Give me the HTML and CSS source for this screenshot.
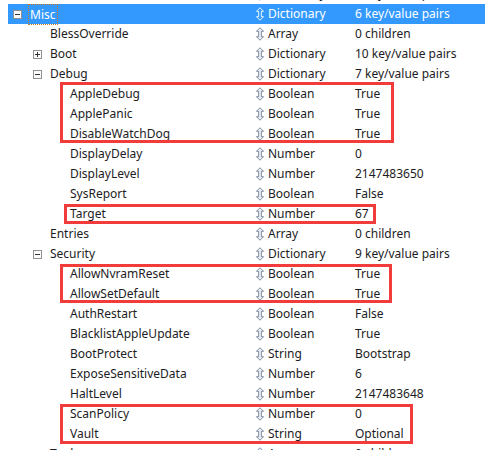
FILE: index.html
```html
<!DOCTYPE html>
<html>
<head>
<meta charset="utf-8">
<link rel="stylesheet" href="styles.css">
</head>
<body>
<div class="tree">
  <div class="row"><div class="name l1">Kernel</div><div class="ic"><svg class="arr" viewBox="0 0 9 15"><path d="M4.5 0.5 L8.5 4.5 L6 4.5 L6 10.5 L8.5 10.5 L4.5 14.5 L0.5 10.5 L3 10.5 L3 4.5 L0.5 4.5 Z"/></svg></div><div class="type">Dictionary</div><div class="val">6 key/value pairs</div></div>
  <div class="row sel"><div class="name l0"><span class="tg minus"></span><span class="focus">Misc</span></div><div class="ic"><svg class="arr" viewBox="0 0 9 15"><path d="M4.5 0.5 L8.5 4.5 L6 4.5 L6 10.5 L8.5 10.5 L4.5 14.5 L0.5 10.5 L3 10.5 L3 4.5 L0.5 4.5 Z"/></svg></div><div class="type">Dictionary</div><div class="val">6 key/value pairs</div></div>
  <div class="row"><div class="name l1">BlessOverride</div><div class="ic"><svg class="arr" viewBox="0 0 9 15"><path d="M4.5 0.5 L8.5 4.5 L6 4.5 L6 10.5 L8.5 10.5 L4.5 14.5 L0.5 10.5 L3 10.5 L3 4.5 L0.5 4.5 Z"/></svg></div><div class="type">Array</div><div class="val">0 children</div></div>
  <div class="row"><div class="name l1"><span class="tg plus"></span>Boot</div><div class="ic"><svg class="arr" viewBox="0 0 9 15"><path d="M4.5 0.5 L8.5 4.5 L6 4.5 L6 10.5 L8.5 10.5 L4.5 14.5 L0.5 10.5 L3 10.5 L3 4.5 L0.5 4.5 Z"/></svg></div><div class="type">Dictionary</div><div class="val">10 key/value pairs</div></div>
  <div class="row"><div class="name l1"><span class="tg minus"></span>Debug</div><div class="ic"><svg class="arr" viewBox="0 0 9 15"><path d="M4.5 0.5 L8.5 4.5 L6 4.5 L6 10.5 L8.5 10.5 L4.5 14.5 L0.5 10.5 L3 10.5 L3 4.5 L0.5 4.5 Z"/></svg></div><div class="type">Dictionary</div><div class="val">7 key/value pairs</div></div>
  <div class="row"><div class="name l2">AppleDebug</div><div class="ic"><svg class="arr" viewBox="0 0 9 15"><path d="M4.5 0.5 L8.5 4.5 L6 4.5 L6 10.5 L8.5 10.5 L4.5 14.5 L0.5 10.5 L3 10.5 L3 4.5 L0.5 4.5 Z"/></svg></div><div class="type">Boolean</div><div class="val">True</div></div>
  <div class="row"><div class="name l2">ApplePanic</div><div class="ic"><svg class="arr" viewBox="0 0 9 15"><path d="M4.5 0.5 L8.5 4.5 L6 4.5 L6 10.5 L8.5 10.5 L4.5 14.5 L0.5 10.5 L3 10.5 L3 4.5 L0.5 4.5 Z"/></svg></div><div class="type">Boolean</div><div class="val">True</div></div>
  <div class="row"><div class="name l2">DisableWatchDog</div><div class="ic"><svg class="arr" viewBox="0 0 9 15"><path d="M4.5 0.5 L8.5 4.5 L6 4.5 L6 10.5 L8.5 10.5 L4.5 14.5 L0.5 10.5 L3 10.5 L3 4.5 L0.5 4.5 Z"/></svg></div><div class="type">Boolean</div><div class="val">True</div></div>
  <div class="row"><div class="name l2">DisplayDelay</div><div class="ic"><svg class="arr" viewBox="0 0 9 15"><path d="M4.5 0.5 L8.5 4.5 L6 4.5 L6 10.5 L8.5 10.5 L4.5 14.5 L0.5 10.5 L3 10.5 L3 4.5 L0.5 4.5 Z"/></svg></div><div class="type">Number</div><div class="val">0</div></div>
  <div class="row"><div class="name l2">DisplayLevel</div><div class="ic"><svg class="arr" viewBox="0 0 9 15"><path d="M4.5 0.5 L8.5 4.5 L6 4.5 L6 10.5 L8.5 10.5 L4.5 14.5 L0.5 10.5 L3 10.5 L3 4.5 L0.5 4.5 Z"/></svg></div><div class="type">Number</div><div class="val">2147483650</div></div>
  <div class="row"><div class="name l2">SysReport</div><div class="ic"><svg class="arr" viewBox="0 0 9 15"><path d="M4.5 0.5 L8.5 4.5 L6 4.5 L6 10.5 L8.5 10.5 L4.5 14.5 L0.5 10.5 L3 10.5 L3 4.5 L0.5 4.5 Z"/></svg></div><div class="type">Boolean</div><div class="val">False</div></div>
  <div class="row"><div class="name l2">Target</div><div class="ic"><svg class="arr" viewBox="0 0 9 15"><path d="M4.5 0.5 L8.5 4.5 L6 4.5 L6 10.5 L8.5 10.5 L4.5 14.5 L0.5 10.5 L3 10.5 L3 4.5 L0.5 4.5 Z"/></svg></div><div class="type">Number</div><div class="val">67</div></div>
  <div class="row"><div class="name l1">Entries</div><div class="ic"><svg class="arr" viewBox="0 0 9 15"><path d="M4.5 0.5 L8.5 4.5 L6 4.5 L6 10.5 L8.5 10.5 L4.5 14.5 L0.5 10.5 L3 10.5 L3 4.5 L0.5 4.5 Z"/></svg></div><div class="type">Array</div><div class="val">0 children</div></div>
  <div class="row"><div class="name l1"><span class="tg minus"></span>Security</div><div class="ic"><svg class="arr" viewBox="0 0 9 15"><path d="M4.5 0.5 L8.5 4.5 L6 4.5 L6 10.5 L8.5 10.5 L4.5 14.5 L0.5 10.5 L3 10.5 L3 4.5 L0.5 4.5 Z"/></svg></div><div class="type">Dictionary</div><div class="val">9 key/value pairs</div></div>
  <div class="row"><div class="name l2">AllowNvramReset</div><div class="ic"><svg class="arr" viewBox="0 0 9 15"><path d="M4.5 0.5 L8.5 4.5 L6 4.5 L6 10.5 L8.5 10.5 L4.5 14.5 L0.5 10.5 L3 10.5 L3 4.5 L0.5 4.5 Z"/></svg></div><div class="type">Boolean</div><div class="val">True</div></div>
  <div class="row"><div class="name l2">AllowSetDefault</div><div class="ic"><svg class="arr" viewBox="0 0 9 15"><path d="M4.5 0.5 L8.5 4.5 L6 4.5 L6 10.5 L8.5 10.5 L4.5 14.5 L0.5 10.5 L3 10.5 L3 4.5 L0.5 4.5 Z"/></svg></div><div class="type">Boolean</div><div class="val">True</div></div>
  <div class="row"><div class="name l2">AuthRestart</div><div class="ic"><svg class="arr" viewBox="0 0 9 15"><path d="M4.5 0.5 L8.5 4.5 L6 4.5 L6 10.5 L8.5 10.5 L4.5 14.5 L0.5 10.5 L3 10.5 L3 4.5 L0.5 4.5 Z"/></svg></div><div class="type">Boolean</div><div class="val">False</div></div>
  <div class="row"><div class="name l2">BlacklistAppleUpdate</div><div class="ic"><svg class="arr" viewBox="0 0 9 15"><path d="M4.5 0.5 L8.5 4.5 L6 4.5 L6 10.5 L8.5 10.5 L4.5 14.5 L0.5 10.5 L3 10.5 L3 4.5 L0.5 4.5 Z"/></svg></div><div class="type">Boolean</div><div class="val">True</div></div>
  <div class="row"><div class="name l2">BootProtect</div><div class="ic"><svg class="arr" viewBox="0 0 9 15"><path d="M4.5 0.5 L8.5 4.5 L6 4.5 L6 10.5 L8.5 10.5 L4.5 14.5 L0.5 10.5 L3 10.5 L3 4.5 L0.5 4.5 Z"/></svg></div><div class="type">String</div><div class="val">Bootstrap</div></div>
  <div class="row"><div class="name l2">ExposeSensitiveData</div><div class="ic"><svg class="arr" viewBox="0 0 9 15"><path d="M4.5 0.5 L8.5 4.5 L6 4.5 L6 10.5 L8.5 10.5 L4.5 14.5 L0.5 10.5 L3 10.5 L3 4.5 L0.5 4.5 Z"/></svg></div><div class="type">Number</div><div class="val">6</div></div>
  <div class="row"><div class="name l2">HaltLevel</div><div class="ic"><svg class="arr" viewBox="0 0 9 15"><path d="M4.5 0.5 L8.5 4.5 L6 4.5 L6 10.5 L8.5 10.5 L4.5 14.5 L0.5 10.5 L3 10.5 L3 4.5 L0.5 4.5 Z"/></svg></div><div class="type">Number</div><div class="val">2147483648</div></div>
  <div class="row"><div class="name l2">ScanPolicy</div><div class="ic"><svg class="arr" viewBox="0 0 9 15"><path d="M4.5 0.5 L8.5 4.5 L6 4.5 L6 10.5 L8.5 10.5 L4.5 14.5 L0.5 10.5 L3 10.5 L3 4.5 L0.5 4.5 Z"/></svg></div><div class="type">Number</div><div class="val">0</div></div>
  <div class="row"><div class="name l2">Vault</div><div class="ic"><svg class="arr" viewBox="0 0 9 15"><path d="M4.5 0.5 L8.5 4.5 L6 4.5 L6 10.5 L8.5 10.5 L4.5 14.5 L0.5 10.5 L3 10.5 L3 4.5 L0.5 4.5 Z"/></svg></div><div class="type">String</div><div class="val">Optional</div></div>
  <div class="row"><div class="name l1">Tools</div><div class="ic"><svg class="arr" viewBox="0 0 9 15"><path d="M4.5 0.5 L8.5 4.5 L6 4.5 L6 10.5 L8.5 10.5 L4.5 14.5 L0.5 10.5 L3 10.5 L3 4.5 L0.5 4.5 Z"/></svg></div><div class="type">Array</div><div class="val">0 children</div></div>

  <div class="mark m1"></div>
  <div class="mark m2"></div>
  <div class="mark m3"></div>
  <div class="mark m4"></div>
</div>
</body>
</html>
```
FILE: styles.css
```css
html, body {
  margin: 0;
  padding: 0;
  background: #ffffff;
  overflow: hidden;
}
body {
  width: 485px;
  height: 450px;
}
.tree {
  position: relative;
  margin-top: -16px;
  font-family: "Noto Sans", "Open Sans", sans-serif;
  font-size: 12px;
  color: #1c1c24;
}
.row {
  display: grid;
  grid-template-columns: 255px 13px 87px 1fr;
  height: 20px;
  line-height: 20px;
  white-space: nowrap;
}
.row.sel {
  background: #3399ff;
  color: #ffffff;
  margin-left: 8px;
  grid-template-columns: 247px 13px 87px 1fr;
}
.name {
  display: flex;
  align-items: center;
}
.name.l0 { padding-left: 5px; }
.row.sel .name.l0 { padding-left: 5px; }
.name.l1 { padding-left: 50px; }
.name.l2 { padding-left: 70px; }
.name.l1 .tg { margin-left: -17px; margin-right: 8px; }
.name.l0 .tg { margin-right: 7px; }
.tg {
  position: relative;
  box-sizing: border-box;
  width: 9px;
  height: 9px;
  border: 1px solid #919191;
  background: #fcfcfc;
  flex: none;
}
.tg::before {
  content: "";
  position: absolute;
  left: 1px;
  top: 3px;
  width: 5px;
  height: 1px;
  background: #333;
}
.tg.plus::after {
  content: "";
  position: absolute;
  left: 3px;
  top: 1px;
  width: 1px;
  height: 5px;
  background: #333;
}
.focus {
  outline: 1px dotted #d07a20;
  outline-offset: 0;
  padding: 0 1px;
  line-height: 19px;
}
.ic {
  display: flex;
  align-items: center;
  padding-left: 1px;
}
.arr {
  width: 8px;
  height: 14px;
}
.arr path {
  fill: #eef2f8;
  stroke: #6f7d92;
  stroke-width: 1;
}
.row.sel .arr path {
  fill: #3399ff;
  stroke: #ffffff;
}
.mark {
  position: absolute;
  box-sizing: border-box;
  border: 3px solid #f23b3b;
}
.m1 { left: 60px; top: 98px; width: 334px; height: 61px; }
.m2 { left: 64px; top: 220px; width: 312px; height: 20px; }
.m3 { left: 60px; top: 280px; width: 332px; height: 39px; }
.m4 { left: 60px; top: 420px; width: 353px; height: 40px; }
```
